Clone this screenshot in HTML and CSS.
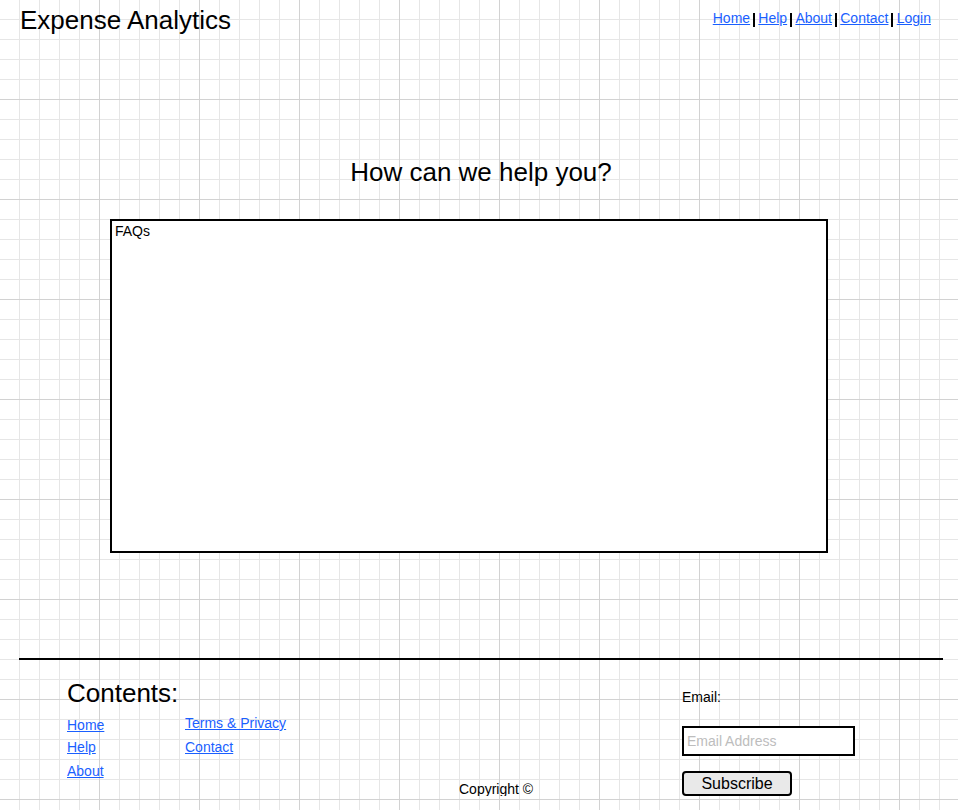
FILE: index.html
```html
<!DOCTYPE html>
<html lang="en">
<head>
<meta charset="utf-8">
<title>Expense Analytics - Help</title>
<link rel="stylesheet" href="styles.css">
</head>
<body>
<header class="site-header">
  <h1 class="site-title">Expense Analytics</h1>
  <nav class="top-nav">
    <a href="#">Home</a><span class="sep"></span><a href="#">Help</a><span class="sep"></span><a href="#">About</a><span class="sep"></span><a href="#">Contact</a><span class="sep"></span><a href="#">Login</a>
  </nav>
</header>
<main class="page">
  <h2 class="help-title">How can we help you?</h2>
  <section class="faq-box">FAQs</section>
</main>
<footer class="page site-footer">
  <hr class="rule">
  <div class="footer-body">
    <div class="footer-contents">
      <h3 class="contents-title">Contents:</h3>
      <div class="link-cols">
        <div class="link-col col-a">
          <a href="#">Home</a>
          <a href="#">Help</a>
          <a class="last" href="#">About</a>
        </div>
        <div class="link-col col-b">
          <a href="#">Terms &amp; Privacy</a>
          <a href="#">Contact</a>
        </div>
      </div>
    </div>
    <div class="copyright">Copyright &copy;</div>
    <form class="subscribe" onsubmit="return false;">
      <label class="email-label" for="email">Email:</label>
      <input class="email-input" id="email" type="email" placeholder="Email Address">
      <button class="subscribe-btn" type="submit">Subscribe</button>
    </form>
  </div>
</footer>
</body>
</html>
```

FILE: styles.css
```css
html {
  background-color: #ffffff;
  background-image:
    linear-gradient(#d2d2d2 1px, transparent 1px),
    linear-gradient(90deg, #d2d2d2 1px, transparent 1px),
    linear-gradient(#e6e6e6 1px, transparent 1px),
    linear-gradient(90deg, #e6e6e6 1px, transparent 1px);
  background-size: 100px 100px, 100px 100px, 20px 20px, 20px 20px;
  background-position: -1px -1px, -1px -1px, -1px -1px, -1px -1px;
  min-height: 100%;
}

body {
  margin: 0;
  font-family: "Liberation Sans", Arial, sans-serif;
  font-size: 14px;
  color: #000;
}

a {
  color: #1a5fff;
  text-decoration: underline;
}

.site-header {
  display: flex;
  justify-content: space-between;
  align-items: flex-start;
  padding: 5px 27px 0 20px;
}

.site-title {
  margin: 0;
  font-size: 26px;
  font-weight: normal;
  line-height: 30px;
}

.top-nav {
  margin-top: 5px;
  font-size: 14px;
  line-height: 16px;
  white-space: nowrap;
}

.sep {
  display: inline-block;
  width: 2px;
  height: 14px;
  margin: 0 3.25px 0 3px;
  background: #000;
  vertical-align: -4px;
}

.page {
  padding: 0 15px 0 19px;
}

.help-title {
  margin: 122px 0 0;
  font-size: 26px;
  font-weight: normal;
  line-height: 30px;
  text-align: center;
}

.faq-box {
  box-sizing: border-box;
  width: 718px;
  height: 334px;
  margin: 32px 0 0 91px;
  padding: 2px 3px;
  border: 2px solid #000;
  background: #fff;
  line-height: 16px;
}

.rule {
  margin: 105px 0 0;
  height: 2px;
  border: 0;
  background: #000;
}

.footer-body {
  display: flex;
  align-items: flex-start;
  padding-left: 48px;
}

.footer-contents {
  width: 391px;
  padding-top: 18px;
}

.contents-title {
  margin: 0;
  font-size: 26px;
  font-weight: normal;
  line-height: 30px;
}

.link-cols {
  display: flex;
}

.link-col {
  display: flex;
  flex-direction: column;
  align-items: flex-start;
  line-height: 16px;
}

.col-a {
  width: 118px;
  margin-top: 9px;
  gap: 6px;
}

.col-a .last {
  margin-top: 2px;
}

.col-b {
  margin-top: 7px;
  gap: 8px;
}

.copyright {
  box-sizing: border-box;
  width: 224px;
  align-self: flex-end;
  margin-bottom: -1px;
  padding-left: 1px;
  line-height: 16px;
}

.subscribe {
  display: flex;
  flex-direction: column;
  align-items: flex-start;
  margin: 0;
  padding-top: 29px;
}

.email-label {
  line-height: 16px;
}

.email-input {
  box-sizing: border-box;
  width: 173px;
  height: 30px;
  margin: 21px 0 0;
  padding: 0 3px;
  border: 2px solid #000;
  border-radius: 0;
  background: #fff;
  font-family: "Liberation Sans", Arial, sans-serif;
  font-size: 14px;
  outline: none;
}

.email-input::placeholder {
  color: #bdbdbd;
}

.subscribe-btn {
  box-sizing: border-box;
  width: 110px;
  height: 25px;
  margin-top: 15px;
  padding: 0;
  border: 2px solid #000;
  border-radius: 4px;
  background: #e9e9e9;
  font-family: "Liberation Sans", Arial, sans-serif;
  font-size: 16px;
  line-height: 18px;
  color: #000;
}
```
